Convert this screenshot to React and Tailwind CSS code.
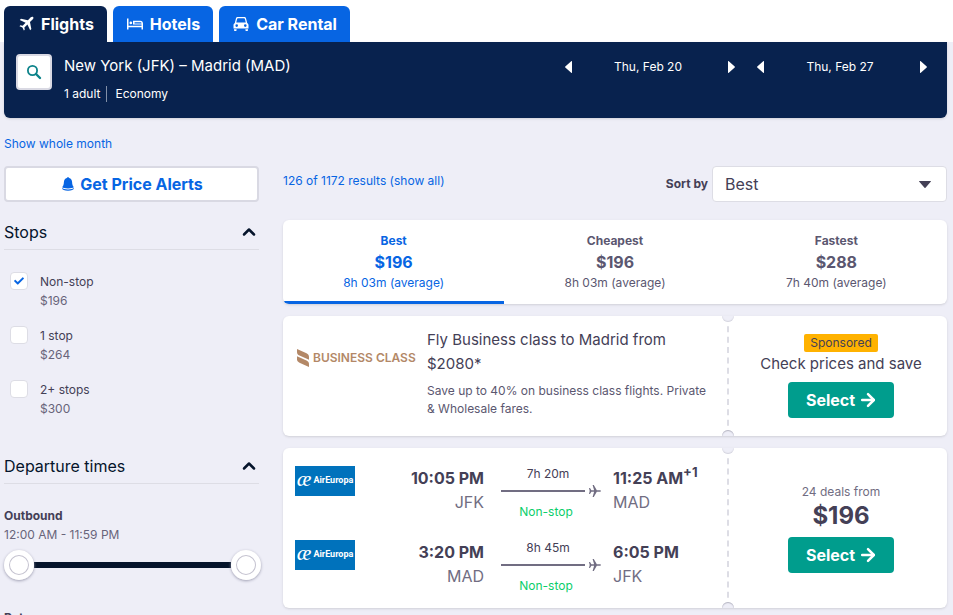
import { FaCheck } from 'react-icons/fa';
import { ArrowRight, ChevronUp } from 'lucide-react';

function PlaneIcon() {
  return (
    <svg viewBox="-2 -1 27 27" className="h-4 w-4" fill="currentColor" aria-hidden="true">
      <path d="M23.500.6c-1-.9-2.800-.6-4 .6L14.800 6 3 3.600 1 5.600l9.800 4.700-5 5.100-3.800-.7L.5 16.200l5 2.400 2.400 5 1.500-1.500-.6-3.800 5.100-5.100 4.600 9.900 2-2-2.300-11.900L23 4.500c1.200-1.200 1.400-3 .5-3.900z" />
    </svg>
  );
}

function BedIcon() {
  return (
    <svg viewBox="0 0 16 16" className="h-4 w-4" fill="currentColor" aria-hidden="true">
      <path d="M0 2.500h1.500v7.300h13V8.500H6V4.700h7.300C15 4.700 16 5.900 16 7.400v6.100h-1.500v-2.200h-13v2.200H0z" />
      <rect x="2.500" y="5.500" width="2.600" height="2.800" rx="1.200" />
      <path d="M7.500 6.200h5.800c.8 0 1.200.5 1.200 1.200H7.500z" className="fill-[#0765e3]" />
    </svg>
  );
}

function CarIcon() {
  return (
    <svg viewBox="0 0 16 16" className="h-4 w-4" fill="currentColor" aria-hidden="true">
      <path
        fillRule="evenodd"
        d="M4.800 1h6.400c.9 0 1.600.5 1.800 1.300L14.200 7c.8.5 1.300 1.300 1.300 2.200V12.500H.5V9.200C.5 8.300 1 7.500 1.800 7L3 2.300C3.200 1.500 3.900 1 4.800 1zm.1 1.300c-.4 0-.6.2-.7.5L3.200 6.600h9.600l-1-3.800c-.1-.3-.3-.5-.7-.5zM3.700 8.300a1.300 1.300 0 1 0 0 2.600 1.300 1.300 0 0 0 0-2.600zm8.600 0a1.300 1.300 0 1 0 0 2.600 1.300 1.300 0 0 0 0-2.600zM1 13.200h2.600v1c0 .5-.3.800-.8.800h-1c-.5 0-.8-.3-.8-.8zm11.400 0H15v1c0 .5-.3.800-.8.800h-1c-.5 0-.8-.3-.8-.8z"
      />
    </svg>
  );
}

function Triangle({ className = '' }) {
  return (
    <svg viewBox="0 0 7 12" className={`h-3 w-[7px] ${className}`} fill="currentColor" aria-hidden="true">
      <path d="M6.200.3c.4-.4.800-.2.800.3v10.800c0 .5-.4.700-.8.300L.3 6.500a.7.700 0 0 1 0-1z" />
    </svg>
  );
}

const tabs = [
  { name: 'Flights', icon: <PlaneIcon />, active: true },
  { name: 'Hotels', icon: <BedIcon /> },
  { name: 'Car Rental', icon: <CarIcon /> },
];

const stops = [
  { label: 'Non-stop', price: '$196', checked: true },
  { label: '1 stop', price: '$264' },
  { label: '2+ stops', price: '$300' },
];

const sortTabs = [
  { label: 'Best', price: '$196', time: '8h 03m (average)', active: true },
  { label: 'Cheapest', price: '$196', time: '8h 03m (average)' },
  { label: 'Fastest', price: '$288', time: '7h 40m (average)' },
];

const legs = [
  { depart: '10:05 PM', from: 'JFK', duration: '7h 20m', arrive: '11:25 AM', plus: '+1', to: 'MAD' },
  { depart: '3:20 PM', from: 'MAD', duration: '8h 45m', arrive: '6:05 PM', to: 'JFK' },
];

function DatePicker({ date }) {
  return (
    <div className="flex w-[170px] items-center text-xs leading-6">
      <button type="button" aria-label="Previous day">
        <Triangle />
      </button>
      <span className="flex-1 pr-1 text-center">{date}</span>
      <button type="button" aria-label="Next day">
        <Triangle className="rotate-180" />
      </button>
    </div>
  );
}

function Header() {
  return (
    <header>
      <nav className="flex gap-1.5 bg-white px-1 pt-1.5">
        {tabs.map((tab) => (
          <a
            key={tab.name}
            href="#"
            className={`flex h-9 items-center gap-[7px] rounded-t-md pr-[13px] pl-3.5 text-base font-bold text-white ${
              tab.active ? 'bg-[#08224e]' : 'bg-[#0765e3]'
            }`}
          >
            {tab.icon}
            {tab.name}
          </a>
        ))}
      </nav>
      <div className="mr-1.5 ml-1 flex h-[76px] items-start rounded-b-md bg-[#08224e] p-3 text-white shadow">
        <button
          type="button"
          aria-label="Search"
          className="flex h-9 w-9 items-center justify-center rounded border-2 border-[#d9d9e3] bg-white text-[#0c838a]"
        >
          <svg viewBox="0 0 16 16" className="h-4 w-4" fill="none" stroke="currentColor" aria-hidden="true">
            <circle cx="6.500" cy="6.500" r="4.600" strokeWidth="1.800" />
            <path d="M10 10l4 4" strokeWidth="2.400" strokeLinecap="round" />
          </svg>
        </button>
        <div className="ml-3 flex-1">
          <h1 className="text-[15px] leading-6">New York (JFK) – Madrid (MAD)</h1>
          <div className="mt-2 flex items-center text-xs leading-4">
            <span className="border-r border-[#8290a8] pr-1.5">1 adult</span>
            <span className="pl-2">Economy</span>
          </div>
        </div>
        <div className="flex gap-[22px] pt-px pr-2">
          <DatePicker date="Thu, Feb 20" />
          <DatePicker date="Thu, Feb 27" />
        </div>
      </div>
    </header>
  );
}

function SectionTitle({ children }) {
  return (
    <button
      type="button"
      className="flex w-full items-center justify-between border-b border-[#dddde5] pb-[5px] text-base leading-6 text-[#05142b]"
    >
      {children}
      <ChevronUp className="h-5 w-5" strokeWidth={3} />
    </button>
  );
}

const thumb =
  'pointer-events-none absolute inset-0 h-[30px] w-full appearance-none bg-transparent [&::-webkit-slider-thumb]:pointer-events-auto [&::-webkit-slider-thumb]:h-[30px] [&::-webkit-slider-thumb]:w-[30px] [&::-webkit-slider-thumb]:appearance-none [&::-webkit-slider-thumb]:rounded-full [&::-webkit-slider-thumb]:bg-white [&::-webkit-slider-thumb]:shadow-[inset_0_0_0_5px_white,inset_0_0_0_6px_#c5c3d0,0_1px_3px_#9c9cb0]';

function Sidebar() {
  return (
    <aside className="w-[255px] shrink-0">
      <button
        type="button"
        className="flex h-9 w-full items-center justify-center gap-1.5 rounded border-2 border-[#d9d9e3] bg-white pl-0.5 text-base font-bold text-[#0765e3]"
      >
        <svg viewBox="0 0 14 16" className="h-3.5 w-3" fill="currentColor" aria-hidden="true">
          <path d="M7 0c.8 0 1.300.5 1.300 1.100C10.500 1.700 11.700 3.500 11.800 6c.1 2.700.6 4.300 2 5.600-.6 1.200-3.600 1.700-6.800 1.700S.8 12.800.2 11.600c1.400-1.300 1.900-2.900 2-5.600.1-2.500 1.300-4.300 3.500-4.900C5.700.5 6.200 0 7 0z" />
          <path d="M0 12.500c1 1.300 3.500 2 7 2s6-.7 7-2c.1 2-2.800 3.500-7 3.500s-7.100-1.500-7-3.500z" />
        </svg>
        Get Price Alerts
      </button>

      <section className="mt-[18px]">
        <SectionTitle>Stops</SectionTitle>
        <div className="mt-[22px] flex flex-col gap-4 pl-1.5">
          {stops.map((stop) => (
            <label key={stop.label} className="flex items-start gap-3 text-xs text-[#444056]">
              <span className="relative flex h-[18px] w-[18px] items-center justify-center">
                <input
                  type="checkbox"
                  defaultChecked={stop.checked}
                  className="peer h-[18px] w-[18px] appearance-none rounded border border-[#dddde5] bg-white"
                />
                <FaCheck className="pointer-events-none absolute hidden h-2.5 w-2.5 text-[#0765e3] peer-checked:block" />
              </span>
              <span className="leading-[19px]">
                {stop.label}
                <span className="block text-[#68647a]">{stop.price}</span>
              </span>
            </label>
          ))}
        </div>
      </section>

      <section className="mt-9">
        <SectionTitle>Departure times</SectionTitle>
        <div className="mt-[22px] text-xs leading-[19px]">
          <h3 className="font-bold text-[#444056]">Outbound</h3>
          <p className="text-[#68647a]">12:00 AM - 11:59 PM</p>
          <div className="relative mt-1.5 -mr-0.5 flex h-[30px] items-center">
            <div className="mx-4 h-1.5 flex-1 bg-[#05142b]" />
            <input type="range" aria-label="Earliest departure" min="0" max="1439" defaultValue="0" className={thumb} />
            <input type="range" aria-label="Latest departure" min="0" max="1439" defaultValue="1439" className={thumb} />
          </div>
          <h3 className="mt-7 font-bold text-[#444056]">Return</h3>
        </div>
      </section>
    </aside>
  );
}

function SelectButton() {
  return (
    <button
      type="button"
      className="flex h-9 items-center gap-[3px] rounded bg-[#009d8d] pr-4 pl-[18px] text-base font-bold text-white"
    >
      Select
      <ArrowRight className="h-5 w-5" strokeWidth={3} />
    </button>
  );
}

// Ticket-shaped card with a perforated line before the price column
function TicketCard({ children, side }) {
  return (
    <article className="flex overflow-hidden rounded-md bg-white shadow">
      <div className="min-w-0 flex-1">{children}</div>
      <div className="relative flex w-[220px] shrink-0 flex-col items-center justify-center border-l-2 border-dashed border-[#dddde5] pl-1.5">
        <span className="absolute -top-1.5 -left-[7px] h-3 w-3 rounded-full bg-[#eeeef7] shadow-[inset_0_-1px_1px_#d5d5df]" />
        <span className="absolute -bottom-1.5 -left-[7px] h-3 w-3 rounded-full bg-[#eeeef7] shadow-[inset_0_1px_1px_#b5b5c2]" />
        {side}
      </div>
    </article>
  );
}

function AirEuropaLogo() {
  return (
    <div className="flex h-[30px] w-[60px] items-center justify-center gap-0.5 bg-[#0072bc] text-white">
      <span className="pb-1 font-['Liberation_Serif',serif] text-[22px] leading-6 italic">æ</span>
      <span className="font-['Roboto',sans-serif] text-[9px] font-bold">AirEuropa</span>
    </div>
  );
}

function Leg({ leg }) {
  return (
    <div className="flex h-14 items-start">
      <AirEuropaLogo />
      <div className="flex-1 text-right text-base leading-6">
        <p className="font-bold text-[#444056]">{leg.depart}</p>
        <p className="text-[#716d82]">{leg.from}</p>
      </div>
      <div className="mr-3 ml-[17px] w-[100px] text-xs">
        <div className="mr-1.5 text-center leading-4 text-[#444056]">{leg.duration}</div>
        <div className="my-0.5 flex h-3.5 items-center gap-1 text-[#716d82]">
          <span className="h-0.5 flex-1 bg-[#716d82]" />
          <svg viewBox="0 0 12 12" className="h-3 w-3" fill="currentColor" aria-hidden="true">
            <path d="M0 3h1l1.400 2.300h2.700L3.600 0h1.200l3 5.300h2.900c.7 0 1.300.3 1.300.7s-.6.700-1.300.7H7.800l-3 5.300H3.600l1.500-5.300H2.400L1 9H0l.7-3z" />
          </svg>
        </div>
        <div className="mr-2.5 pt-1 text-center leading-4 text-[#0cce6b]">Non-stop</div>
      </div>
      <div className="w-[102px] text-base leading-6">
        <p className="flex font-bold text-[#444056]">
          {leg.arrive}
          {leg.plus && <span className="-mt-1.5 text-[13px]">{leg.plus}</span>}
        </p>
        <p className="text-[#716d82]">{leg.to}</p>
      </div>
    </div>
  );
}

function Results() {
  return (
    <main className="min-w-0 flex-1">
      <div className="flex h-9 items-center">
        <a href="#" className="-mt-1.5 flex-1 text-xs text-[#0765e3]">
          126 of 1172 results (show all)
        </a>
        <label htmlFor="sort" className="mr-1 text-xs font-bold text-[#444056]">
          Sort by
        </label>
        <div className="relative w-[235px]">
          <select
            id="sort"
            className="h-9 w-full appearance-none rounded border border-[#dddde5] bg-white px-3 text-base text-[#444056]"
          >
            <option>Best</option>
          </select>
          <svg
            viewBox="0 0 12 7"
            className="pointer-events-none absolute top-[15px] right-4 h-[7px] w-3 fill-[#444056]"
            aria-hidden="true"
          >
            <path d="M.3.800C-.1.400.100 0 .6 0h10.800c.5 0 .7.400.3.800L6.500 6.700a.7.700 0 0 1-1 0z" />
          </svg>
        </div>
      </div>

      <div className="mt-[18px] flex h-[84px] overflow-hidden rounded-md bg-white shadow">
        {sortTabs.map((tab) => (
          <button
            key={tab.label}
            type="button"
            className={`flex flex-1 flex-col items-center pt-3 text-xs ${
              tab.active ? 'text-[#0765e3] shadow-[inset_0_-3px_0_#0765e3]' : 'text-[#5b5770]'
            }`}
          >
            <span className="leading-[18px] font-bold">{tab.label}</span>
            <span className="text-base leading-6 font-bold">{tab.price}</span>
            <span className="leading-[18px]">{tab.time}</span>
          </button>
        ))}
      </div>

      <div className="mt-3 flex flex-col gap-3">
        <TicketCard
          side={
            <>
              <span className="rounded-xs bg-[#ffb200] px-1.5 text-xs leading-[18px] text-[#444056]">Sponsored</span>
              <p className="mb-1.5 text-[15px] leading-6 text-[#444056]">Check prices and save</p>
              <SelectButton />
            </>
          }
        >
          <div className="flex pt-3 pr-4 pb-[18px] pl-3.5">
            <div className="flex h-[60px] w-[130px] shrink-0 items-center gap-1 text-[#b38867]">
              <svg viewBox="0 0 12 18" className="h-[18px] w-3" fill="currentColor" aria-hidden="true">
                <path d="M0 0l9.500 4.200C11.200 5 12 6.200 12 8v2.700L2.500 6.500C.9 5.800 0 5 0 3z" />
                <path d="M0 7.300l9.500 4.200c1.700.8 2.500 2 2.500 3.800V18l-9.500-4.200C.9 13 0 12 0 10.300z" />
              </svg>
              <span className="text-xs font-semibold whitespace-nowrap">BUSINESS CLASS</span>
            </div>
            <div>
              <h2 className="max-w-[270px] text-[15px] leading-6 text-[#444056]">
                Fly Business class to Madrid from $2080*
              </h2>
              <p className="mt-1.5 text-xs leading-[18px] text-[#5b5770]">
                Save up to 40% on business class flights. Private &amp; Wholesale fares.
              </p>
            </div>
          </div>
        </TicketCard>

        <TicketCard
          side={
            <>
              <span className="text-xs leading-[18px] text-[#716d82]">24 deals from</span>
              <p className="mb-1.5 text-2xl leading-[30px] font-bold text-[#444056]">$196</p>
              <SelectButton />
            </>
          }
        >
          <div className="flex flex-col gap-[18px] px-3 pt-[18px] pb-3">
            {legs.map((leg) => (
              <Leg key={leg.depart} leg={leg} />
            ))}
          </div>
        </TicketCard>
      </div>
    </main>
  );
}

export default function App() {
  return (
    <div className="min-h-screen bg-[#eeeef7] font-['Inter',sans-serif]">
      <Header />
      <div className="pt-4 pr-1.5 pl-1">
        <a href="#" className="block w-fit text-xs leading-5 text-[#0765e3]">
          Show whole month
        </a>
        <div className="mt-3 flex gap-6">
          <Sidebar />
          <Results />
        </div>
      </div>
    </div>
  );
}
